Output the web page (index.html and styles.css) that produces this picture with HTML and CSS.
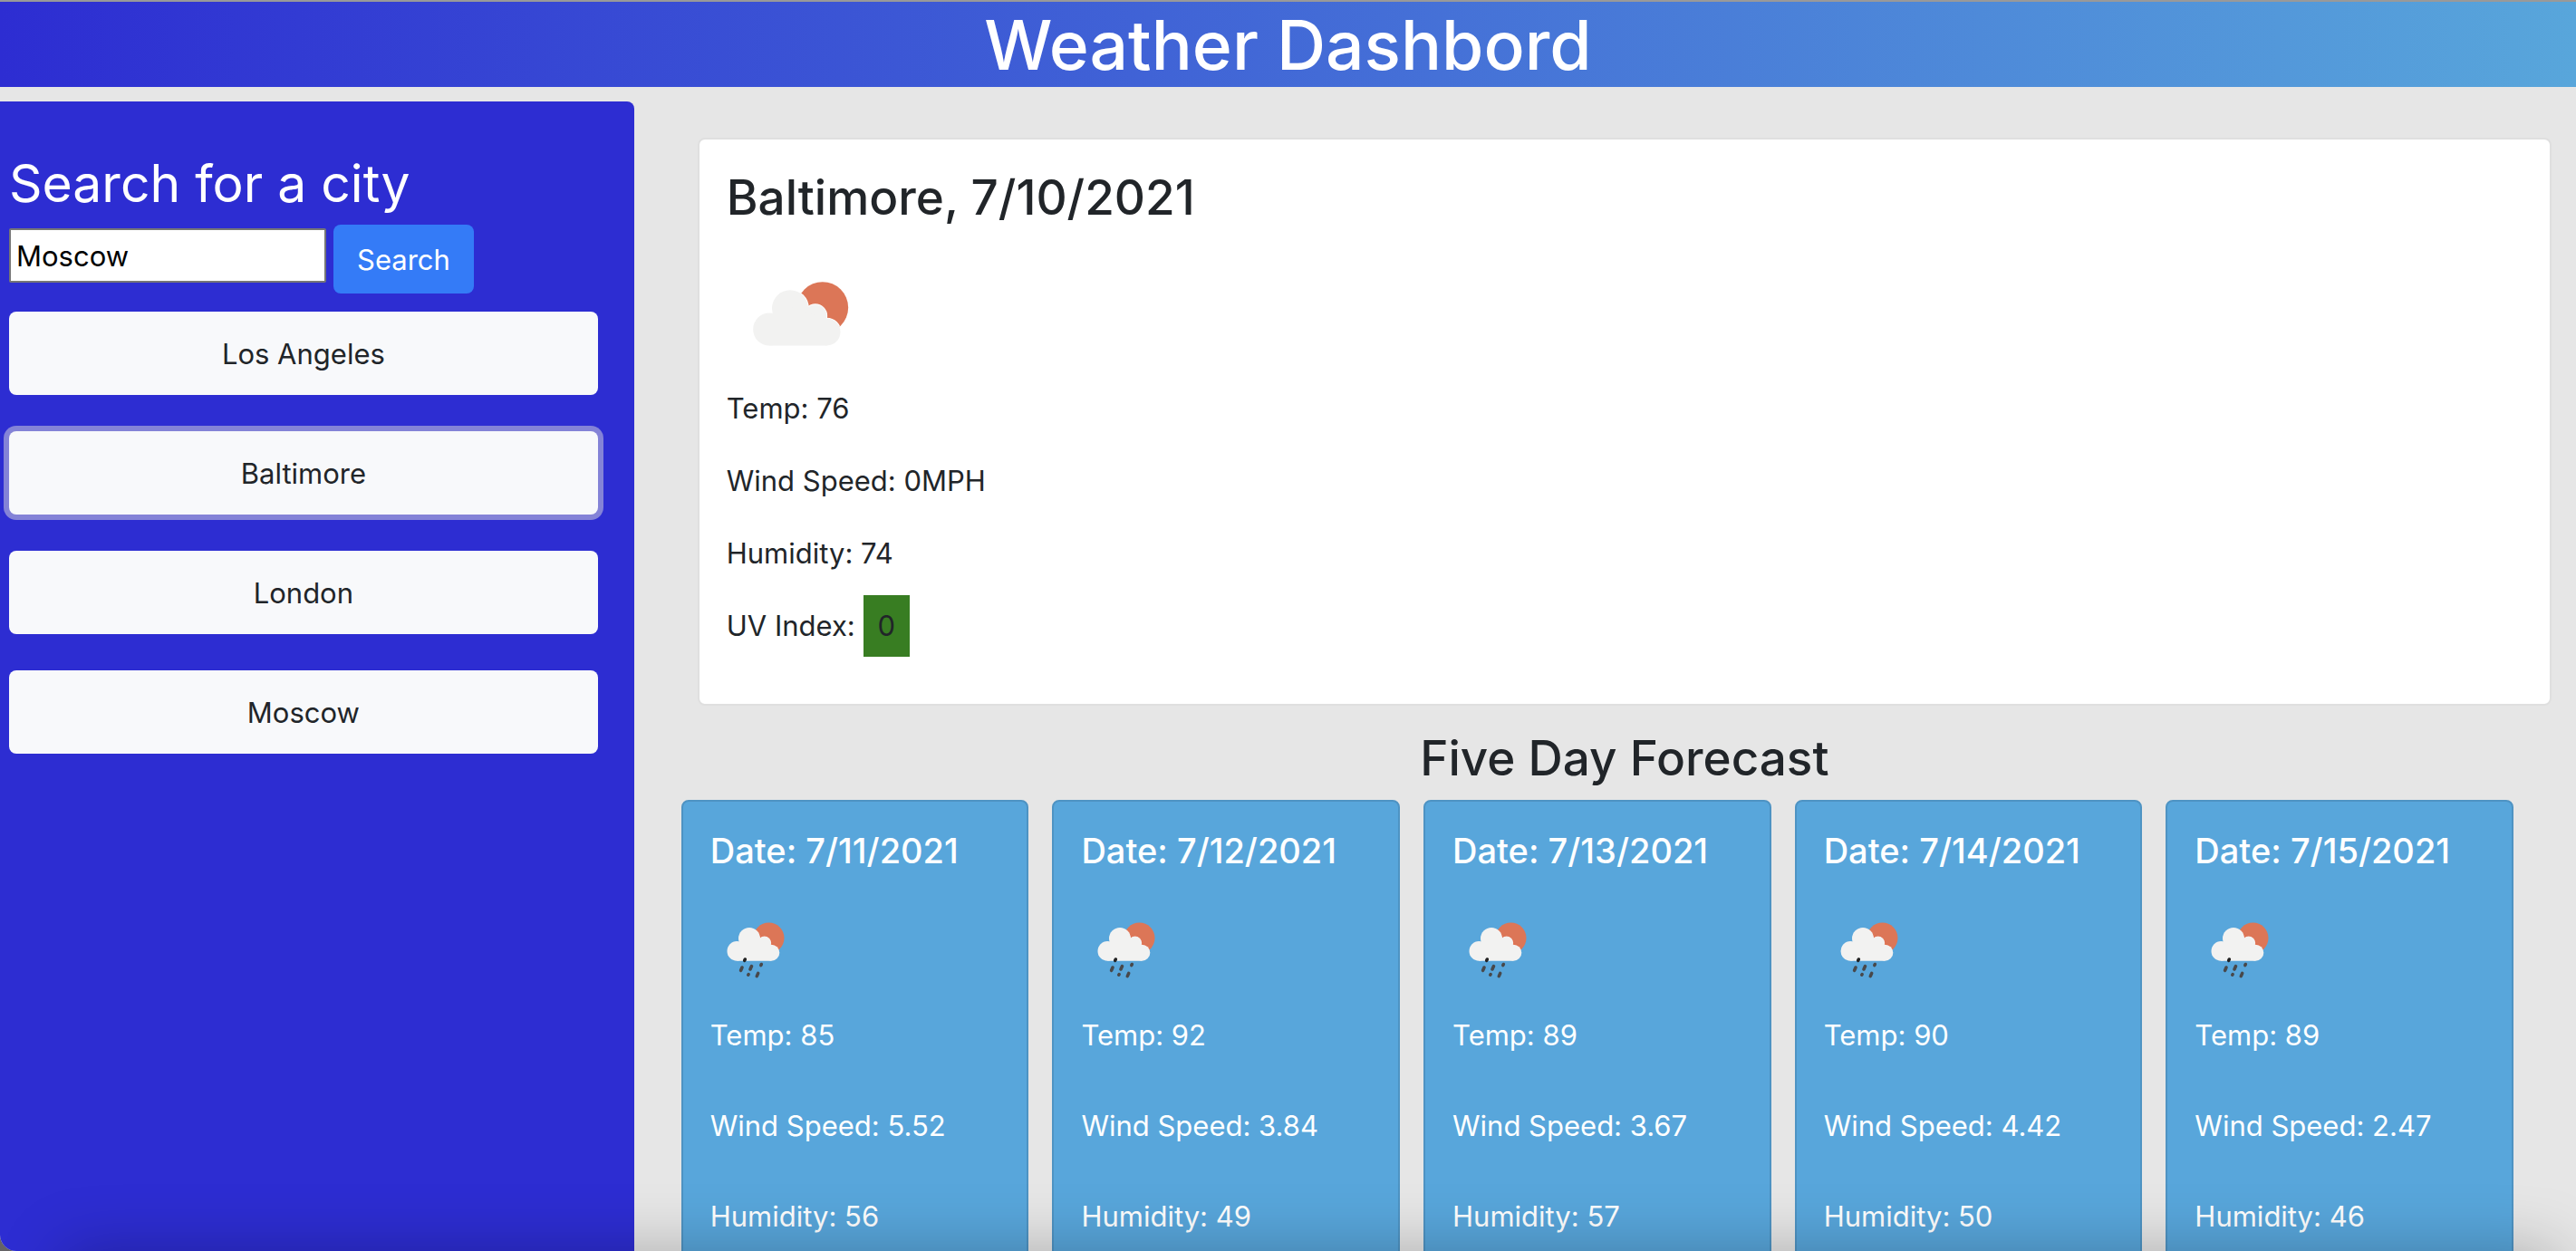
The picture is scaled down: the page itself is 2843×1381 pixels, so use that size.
FILE: index.html
```html
<!DOCTYPE html>
<html lang="en">
<head>
<meta charset="utf-8">
<title>Weather Dashbord</title>
<link rel="stylesheet" href="styles.css">
</head>
<body>
<svg class="sprite" aria-hidden="true">
  <clipPath id="sun-disc"><circle cx="64.5" cy="36.5" r="17"/></clipPath>
  <symbol id="sun-cloud" viewBox="0 0 100 100" overflow="visible">
    <circle cx="64.5" cy="36.5" r="17" fill="#dc7657"/>
    <g class="cloud-edge" clip-path="url(#sun-disc)">
      <circle cx="43" cy="37" r="12"/><circle cx="59.7" cy="42" r="7.5"/><circle cx="67.3" cy="52.7" r="9"/>
    </g>
    <g fill="#f2f2f1">
      <circle cx="29.3" cy="50.9" r="10.8"/><circle cx="43" cy="37" r="12"/><circle cx="59.7" cy="42" r="7.5"/><circle cx="67.3" cy="52.7" r="9"/>
      <path d="M29.3 61.7H67.3V44L43 36L29.3 45Z"/>
    </g>
  </symbol>
  <symbol id="rain" viewBox="0 0 100 100">
    <use href="#sun-cloud" width="100" height="100"/>
    <g stroke="#48484a" stroke-width="3.6" stroke-linecap="round">
      <path stroke="#222" d="M37.7 61.3L38.3 60"/>
      <path d="M33.6 72.3L35 69M44 71L45.5 67.6M55.8 66.6L56.3 65.5M41.8 77.1L42.1 76.6M51.3 78.6L52.7 75.4"/>
    </g>
  </symbol>
</svg>
<div class="window">
  <header class="banner"><h1>Weather Dashbord</h1></header>
  <div class="layout">
    <aside class="sidebar">
      <form class="search">
        <label for="city">Search for a city</label>
        <div class="search-row">
          <input id="city" type="text" value="Moscow">
          <button type="button" class="search-button">Search</button>
        </div>
      </form>
      <div class="cities">
        <button type="button" class="city">Los Angeles</button>
        <button type="button" class="city active">Baltimore</button>
        <button type="button" class="city">London</button>
        <button type="button" class="city">Moscow</button>
      </div>
    </aside>
    <main class="content">
      <section class="today">
        <h2>Baltimore, 7/10/2021</h2>
        <svg class="today-icon" viewBox="1 -1 96 90" role="img" aria-label="Few clouds"><use href="#sun-cloud" width="100" height="100"/></svg>
        <p>Temp: 76</p>
        <p>Wind Speed: 0MPH</p>
        <p>Humidity: 74</p>
        <p>UV Index: <span class="uv">0</span></p>
      </section>
      <h2 class="forecast-title">Five Day Forecast</h2>
      <section class="forecast">
        <article class="day">
          <h3>Date: 7/11/2021</h3>
          <svg class="day-icon" role="img" aria-label="Rain"><use href="#rain"/></svg>
          <p>Temp: 85</p><p>Wind Speed: 5.52</p><p>Humidity: 56</p>
        </article>
        <article class="day">
          <h3>Date: 7/12/2021</h3>
          <svg class="day-icon" role="img" aria-label="Rain"><use href="#rain"/></svg>
          <p>Temp: 92</p><p>Wind Speed: 3.84</p><p>Humidity: 49</p>
        </article>
        <article class="day">
          <h3>Date: 7/13/2021</h3>
          <svg class="day-icon" role="img" aria-label="Rain"><use href="#rain"/></svg>
          <p>Temp: 89</p><p>Wind Speed: 3.67</p><p>Humidity: 57</p>
        </article>
        <article class="day">
          <h3>Date: 7/14/2021</h3>
          <svg class="day-icon" role="img" aria-label="Rain"><use href="#rain"/></svg>
          <p>Temp: 90</p><p>Wind Speed: 4.42</p><p>Humidity: 50</p>
        </article>
        <article class="day">
          <h3>Date: 7/15/2021</h3>
          <svg class="day-icon" role="img" aria-label="Rain"><use href="#rain"/></svg>
          <p>Temp: 89</p><p>Wind Speed: 2.47</p><p>Humidity: 46</p>
        </article>
      </section>
    </main>
  </div>
  <div class="edge-shade"></div>
</div>
</body>
</html>
```
FILE: styles.css
```css
* { box-sizing: border-box; }

html { background: #656366; }

body {
  margin: 0;
  font-family: Inter, "Liberation Sans", sans-serif;
  font-size: 31px;
  line-height: 48px;
  color: #212529;
}

h1, h2, h3, p { margin: 0; }
h1, h2, h3 { font-weight: 500; }

button, input { font: inherit; }

.sprite { position: absolute; width: 0; height: 0; }
.cloud-edge { fill: none; stroke: var(--cloud-edge, #e2623f); stroke-width: 1; }

/* Window frame */
.window {
  position: relative;
  display: flex;
  flex-direction: column;
  height: 100vh;
  overflow: hidden;
  background: #e6e6e6;
  border-bottom-left-radius: 18px;
}

.edge-shade {
  position: absolute;
  top: 100%;
  left: 70px;
  right: 20px;
  height: 200px;
  box-shadow: 0 0 70px rgba(0, 0, 0, .26);
  pointer-events: none;
}

.banner {
  flex: none;
  border-top: 2px solid #999;
  background: linear-gradient(to right, #2d2dd2, #58a6db);
  color: #fff;
  text-align: center;
}
.banner h1 { padding-top: 2px; font-size: 75px; line-height: 92px; }

.layout {
  flex: 1 0 auto;
  display: grid;
  grid-template-columns: 25% minmax(0, 1fr);
  padding-top: 16px;
}

/* Sidebar */
.sidebar {
  margin-right: 11px;
  padding: 52px 40px 0 10px;
  background: #2d2dd2;
  border-top-right-radius: 8px;
}
.search label {
  display: block;
  padding-top: 2px;
  color: #fff;
  font-size: 57px;
  line-height: 74px;
}
.search-row {
  display: flex;
  align-items: flex-start;
  gap: 8px;
  margin-top: 8px;
}
.search input {
  width: 350px;
  height: 60px;
  margin: 4px 0 0;
  padding: 0 6px;
  border: 2px solid #767676;
  border-radius: 2px;
  background: #fff;
  color: #000;
}
.search-button {
  padding: 15px 26px 13px;
  border: 0;
  border-radius: 8px;
  background: #347bf7;
  color: #fff;
}
.cities {
  display: flex;
  flex-direction: column;
  gap: 40px;
  margin-top: 20px;
}
.city {
  padding: 23px 22px 21px;
  border: 0;
  border-radius: 8px;
  background: #f8f9fb;
  color: #212529;
}
.city.active { box-shadow: 0 0 0 6px #8483d7; }

/* Current weather */
.content { padding: 40px 27px 0 59px; }
.today {
  padding: 30px;
  border: 2px solid #dfdfdf;
  border-radius: 8px;
  background: #fff;
}
.today h2, .forecast-title { font-size: 53px; line-height: 68px; }
.today-icon {
  --cloud-edge: #fff;
  display: block;
  width: 160px;
  height: 150px;
  margin-top: 25px;
}
.today p { margin-bottom: 32px; }
.uv {
  display: inline-block;
  margin: -10px 0;
  padding: 10px 16px;
  background: #387d22;
}

/* Forecast */
.forecast-title {
  margin: 24px 0 12px;
  text-align: center;
}
.forecast {
  display: grid;
  grid-template-columns: repeat(5, minmax(0, 1fr));
  gap: 26px;
  margin: 0 42px 0 -18px;
}
.day {
  padding: 30px;
  border: 2px solid #4e93c3;
  border-radius: 8px;
  background: #58a6db;
  color: #fff;
}
.day h3 { font-size: 38px; line-height: 48px; }
.day-icon {
  display: block;
  width: 100px;
  height: 100px;
  margin: 36px 0 20px;
}
.day p { margin-bottom: 52px; }
```
